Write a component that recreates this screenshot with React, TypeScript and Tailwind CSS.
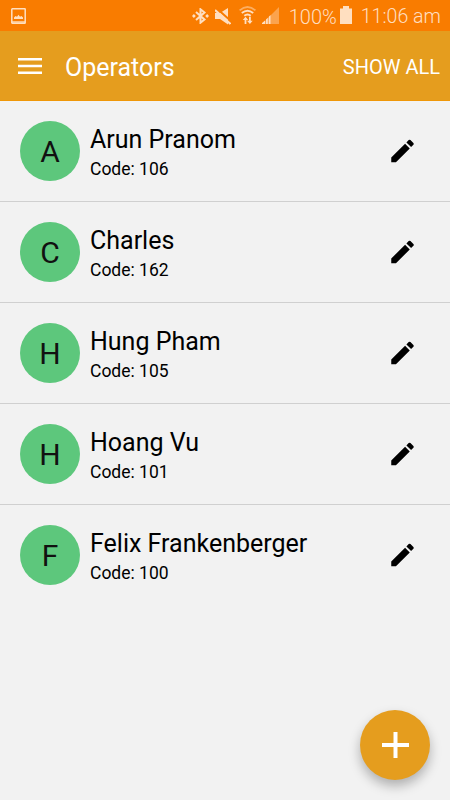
type Operator = {
  name: string;
  code: number;
};

const operators: Operator[] = [
  { name: "Arun Pranom", code: 106 },
  { name: "Charles", code: 162 },
  { name: "Hung Pham", code: 105 },
  { name: "Hoang Vu", code: 101 },
  { name: "Felix Frankenberger", code: 100 },
];

function StatusBar() {
  return (
    <div className="flex h-[31px] items-center bg-[#f97c00] pt-px pr-[9px] pl-[11px] text-[#ffdfc0]">
      <svg width="15" height="16" viewBox="0 0 15 16" fill="none">
        <rect x="0.8" y="0.8" width="13.4" height="14.4" rx="0.5" stroke="currentColor" strokeWidth="1.500" />
        <path d="M1 13h13v2.400H1z" fill="currentColor" opacity=".7" />
        <path d="M3 11V9.500l1.500-1.500 1.500.8L7.500 6.800 9 8.800l1.500-.8L12 9.500V11z" fill="currentColor" />
      </svg>

      <div className="ml-auto flex items-center">
        <svg width="17" height="16" viewBox="0 0 17 16" fill="none">
          <path d="M4 4l8.500 7.500-4 3.200V1.300l4 3.200L4 12" stroke="currentColor" strokeWidth="2" />
          <path d="M1.900 6.100L3.800 8 1.900 9.900 0 8zM15.100 6.100L17 8l-1.900 1.900L13.200 8z" fill="currentColor" />
        </svg>
        <svg className="ml-1.5" width="16" height="17" viewBox="0 0 16 17">
          <path d="M0 5h5L13 0v16.500L5 11H0z" fill="currentColor" />
          <path d="M1.500 .2l15 13.300" stroke="#f97c00" strokeWidth="2" />
          <path d="M0 2l15.500 14" stroke="currentColor" strokeWidth="2.200" />
        </svg>
        <svg className="ml-2 -mt-0.5" width="17" height="18" viewBox="0 0 17 18" fill="none">
          <path d="M.6 4.400Q8.500-2.300 16.400 4.400" stroke="currentColor" strokeWidth="1.900" opacity=".5" />
          <path d="M2.800 7q5.700-4.600 11.400 0M5.300 9.700q3.200-2.600 6.400 0" stroke="currentColor" strokeWidth="1.900" />
          <path d="M3.800 14l2.700-3.200L9.200 14H7.400v4H5.600v-4zM8 14.800h2v-4h1.800v4h1.900L10.900 18z" fill="currentColor" />
        </svg>
        <svg className="ml-1.5 -mt-px" width="17" height="17" viewBox="0 0 17 17" fill="currentColor">
          <path d="M0 17L17 0v17z" opacity=".4" />
          <path d="M0 17v-1l3-2.500V17zM4 17v-4.500l1.800-1.800V17zM6.800 17V9.700L8.500 8v9z" />
        </svg>
        <span className="ml-[10px] w-[48px] pt-px text-[20px] leading-none font-light">100%</span>
        <svg className="ml-[3px] -mt-0.5" width="12" height="18" viewBox="0 0 12 18" fill="currentColor">
          <path d="M0 2.500h3V0h6v2.500h3V18H0z" />
        </svg>
        <span className="ml-[9px] pt-0.5 text-[19.600px] leading-none font-light">11:06 am</span>
      </div>
    </div>
  );
}

function AppBar() {
  return (
    <header className="flex h-[70px] items-center border-b border-[#ef9708] bg-[#e59d1e] pr-[10px] pl-[18px] text-white">
      <button type="button" aria-label="Menu">
        <svg width="24" height="16" viewBox="0 0 24 16" fill="currentColor">
          <path d="M0 0h24v2.600H0zM0 6.700h24v2.600H0zM0 13.400h24V16H0z" />
        </svg>
      </button>
      <h1 className="ml-[23px] pt-1 text-[25px] leading-none">Operators</h1>
      <button type="button" className="ml-auto pt-0.5 text-[20px] leading-none">
        SHOW ALL
      </button>
    </header>
  );
}

function OperatorRow({ name, code }: Operator) {
  return (
    <li className="flex h-[101px] items-center border-b border-[#d0d0d0] pr-8 pl-5 last:border-transparent">
      <div className="flex size-[60px] items-center justify-center rounded-full bg-[#5dc77c] pt-0.5 text-[30px] leading-none text-[#111]">
        {name[0]}
      </div>
      <div className="ml-[10px] flex-1 pt-1">
        <p className="text-[25px] leading-[32px]">{name}</p>
        <p className="text-[17.500px] leading-[26px]">Code: {code}</p>
      </div>
      <button type="button" aria-label={`Edit ${name}`}>
        <svg width="31" height="30" viewBox="0 0 24 24">
          <path d="M3 17.250V21h3.750L17.810 9.940l-3.750-3.750L3 17.250zM20.710 7.040a1 1 0 0 0 0-1.410l-2.340-2.340a1 1 0 0 0-1.410 0l-1.830 1.830 3.750 3.750 1.830-1.830z" />
        </svg>
      </button>
    </li>
  );
}

export default function App() {
  return (
    <div className="relative h-[800px] w-[450px] overflow-hidden bg-[#f2f2f2] font-['Roboto',sans-serif] text-black">
      <StatusBar />
      <AppBar />
      <ul>
        {operators.map((o) => (
          <OperatorRow key={o.code} {...o} />
        ))}
      </ul>

      <button
        type="button"
        aria-label="Add operator"
        className="absolute right-5 bottom-5 flex size-[70px] items-center justify-center rounded-full bg-[#e59d1e] text-white shadow-[0_6px_12px_rgba(0,0,0,0.28)]"
      >
        <svg width="27" height="26" viewBox="0 0 27 26" fill="currentColor">
          <path d="M11.500 0h4v11H27v4H15.500v11h-4V15H0v-4h11.500z" />
        </svg>
      </button>
    </div>
  );
}
